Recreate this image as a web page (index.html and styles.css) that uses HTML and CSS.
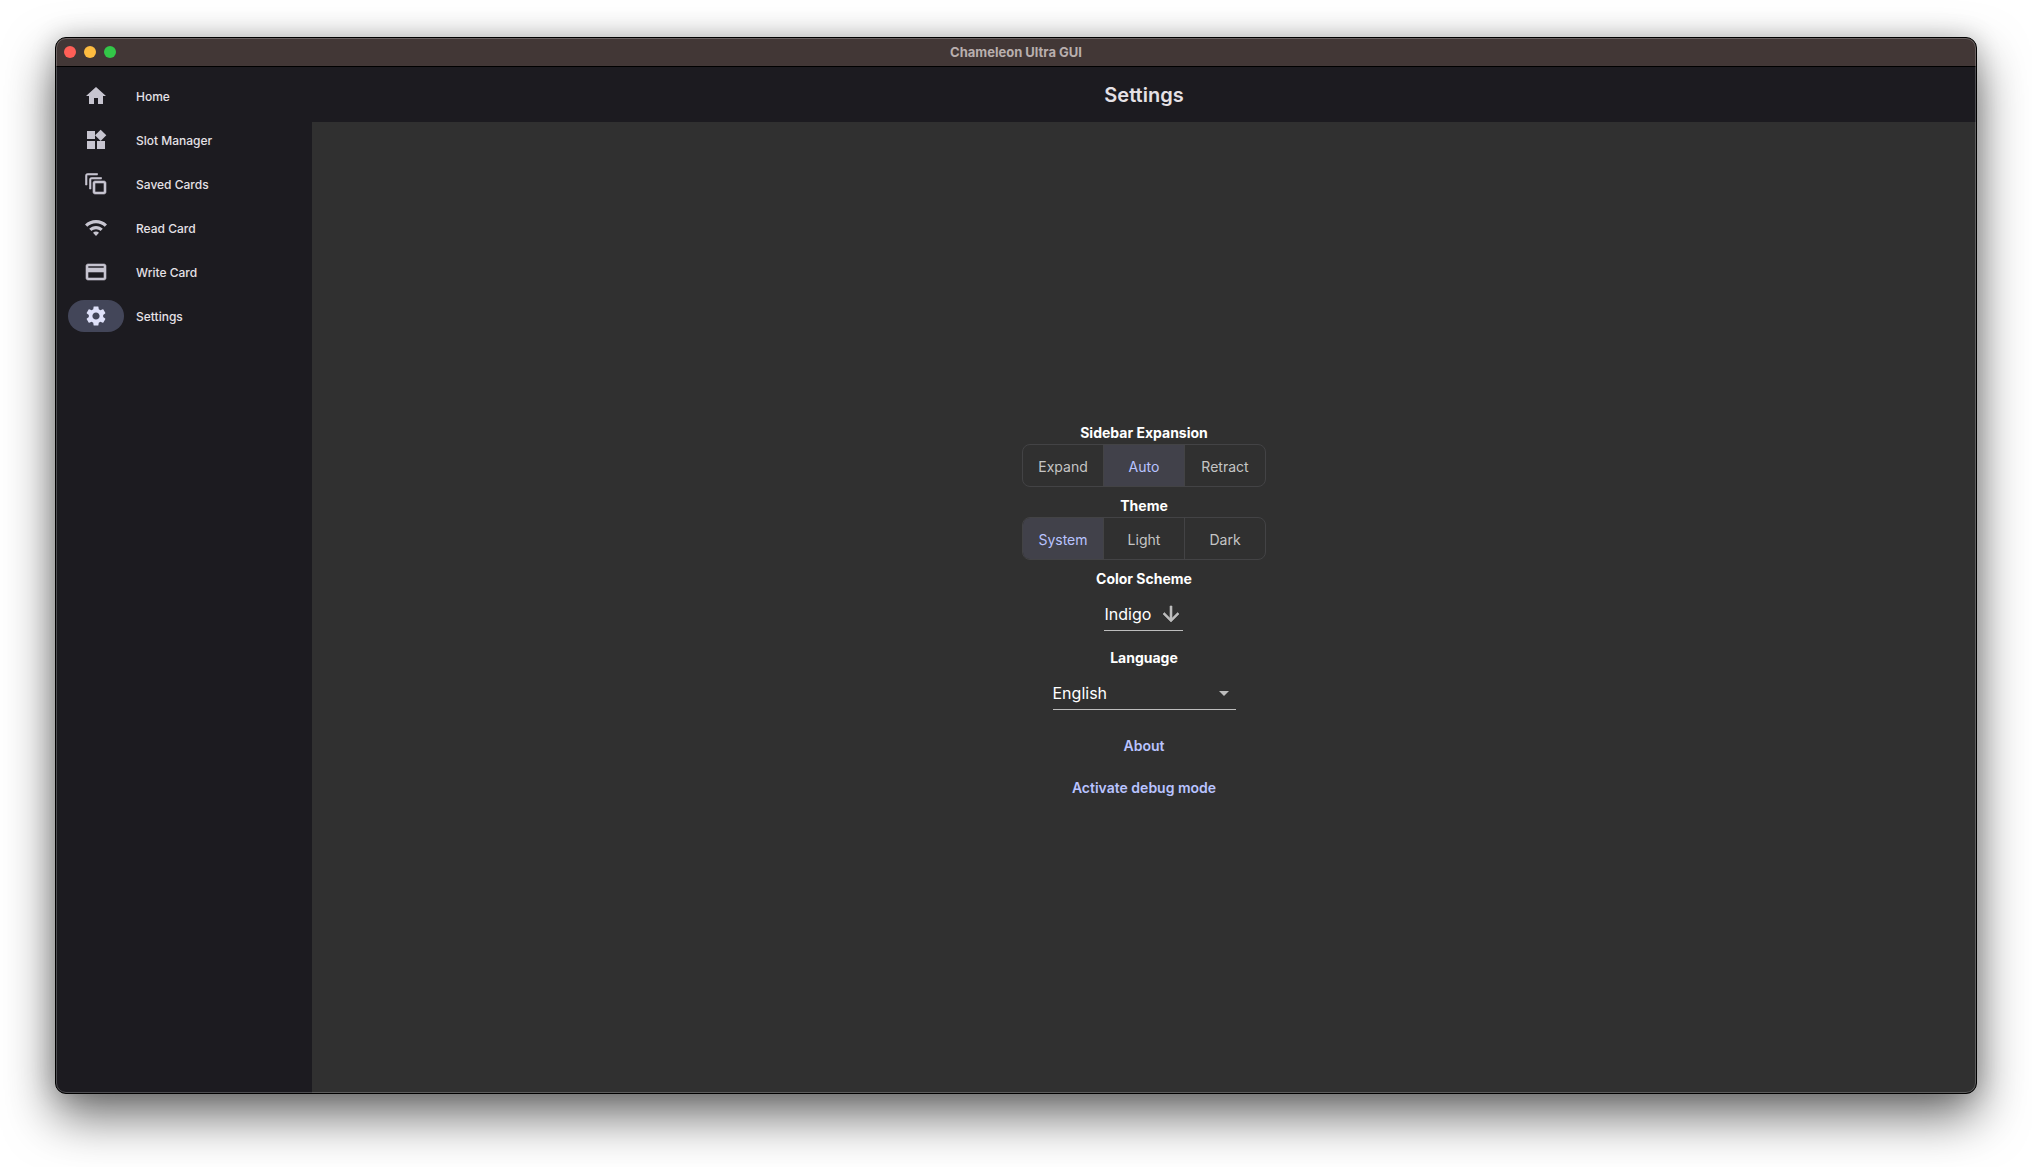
FILE: index.html
```html
<!DOCTYPE html>
<html lang="en">
<head>
    <meta charset="UTF-8">
    <meta name="viewport" content="width=device-width, initial-scale=1.0">
    <title>Chameleon Ultra GUI</title>
    <link rel="stylesheet" href="styles.css">
</head>
<body>
    <div class="window">
        <header class="titlebar">
            <div class="window-controls">
                <button type="button" class="control close" aria-label="Close"></button>
                <button type="button" class="control minimize" aria-label="Minimize"></button>
                <button type="button" class="control maximize" aria-label="Maximize"></button>
            </div>
            <div class="window-title">Chameleon Ultra GUI</div>
        </header>

        <div class="app">
            <nav class="sidebar">
                <a class="nav-item" href="#home">
                    <span class="nav-icon"><svg viewBox="0 0 24 24"><path d="M10 20v-6h4v6h5v-8h3L12 3 2 12h3v8z"/></svg></span>
                    <span class="nav-label">Home</span>
                </a>
                <a class="nav-item" href="#slots">
                    <span class="nav-icon"><svg viewBox="0 0 24 24"><path d="M13 13v8h8v-8h-8zM3 21h8v-8H3v8zM3 3v8h8V3H3zm13.66-1.31L11 7.34 16.66 13l5.66-5.66-5.66-5.65z"/></svg></span>
                    <span class="nav-label">Slot Manager</span>
                </a>
                <a class="nav-item" href="#saved">
                    <span class="nav-icon"><svg class="bold" viewBox="0 0 24 24"><path d="M3 13H1.500V3.500c0-1.100.9-2 2-2h10V3H3v10zM7 17H5.500V7.500c0-1.100.9-2 2-2h10V7H7v10zM20 22h-9c-1.100 0-2-.9-2-2v-9c0-1.100.9-2 2-2h9c1.100 0 2 .9 2 2v9c0 1.100-.9 2-2 2zM11 11v9h9v-9h-9z"/></svg></span>
                    <span class="nav-label">Saved Cards</span>
                </a>
                <a class="nav-item" href="#read">
                    <span class="nav-icon"><svg viewBox="0 0 24 24"><path d="M12 4C7.700 4 3.800 5.700 1 8.500l2.300 2.300C5.500 8.600 8.600 7.200 12 7.200s6.500 1.400 8.700 3.600L23 8.500C20.200 5.700 16.300 4 12 4zM12 10c-2.700 0-5.100 1.100-6.800 2.800l2.300 2.300c1.150-1.150 2.750-1.900 4.500-1.900s3.350.75 4.500 1.900l2.300-2.300C17.100 11.100 14.700 10 12 10zM12 15.600c-1.200 0-2.200.4-3 1.200l3 3.200 3-3.200c-.8-.8-1.800-1.200-3-1.200z"/></svg></span>
                    <span class="nav-label">Read Card</span>
                </a>
                <a class="nav-item" href="#write">
                    <span class="nav-icon"><svg class="bold" viewBox="0 0 24 24"><path d="M20 4H4c-1.110 0-1.990.89-1.990 2L2 18c0 1.110.89 2 2 2h16c1.110 0 2-.89 2-2V6c0-1.110-.89-2-2-2zm0 14H4v-6h16v6zm0-10H4V6h16v2z"/></svg></span>
                    <span class="nav-label">Write Card</span>
                </a>
                <a class="nav-item active" href="#settings" aria-current="page">
                    <span class="nav-icon"><svg viewBox="0 0 24 24"><path d="M19.140 12.940c.04-.3.06-.61.06-.94 0-.32-.02-.64-.07-.94l2.030-1.580c.18-.14.23-.41.12-.61l-1.920-3.320c-.12-.22-.37-.29-.59-.22l-2.390.96c-.5-.38-1.030-.7-1.620-.94l-.36-2.540c-.04-.24-.24-.41-.48-.41h-3.840c-.24 0-.43.17-.47.41l-.36 2.540c-.59.24-1.130.57-1.620.94l-2.390-.96c-.22-.08-.47 0-.59.22L2.740 8.870c-.12.21-.08.47.12.61l2.030 1.580c-.05.3-.09.63-.09.94s.02.64.07.94l-2.030 1.580c-.18.14-.23.41-.12.61l1.920 3.320c.12.22.37.29.59.22l2.390-.96c.5.38 1.030.7 1.620.94l.36 2.540c.05.24.24.41.48.41h3.840c.24 0 .44-.17.47-.41l.36-2.540c.59-.24 1.130-.56 1.620-.94l2.390.96c.22.08.47 0 .59-.22l1.920-3.320c.12-.22.07-.47-.12-.61l-2.010-1.580zM12 15.600c-1.980 0-3.600-1.620-3.600-3.600s1.620-3.600 3.600-3.600 3.600 1.620 3.600 3.600-1.620 3.600-3.600 3.600z"/></svg></span>
                    <span class="nav-label">Settings</span>
                </a>
            </nav>

            <main class="page">
                <div class="app-bar">
                    <h1>Settings</h1>
                </div>

                <div class="settings">
                    <section class="setting">
                        <h2 id="sidebar-label">Sidebar Expansion</h2>
                        <div class="toggle-group" role="group" aria-labelledby="sidebar-label">
                            <button type="button" aria-pressed="false">Expand</button>
                            <button type="button" aria-pressed="true">Auto</button>
                            <button type="button" aria-pressed="false">Retract</button>
                        </div>
                    </section>

                    <section class="setting">
                        <h2 id="theme-label">Theme</h2>
                        <div class="toggle-group" role="group" aria-labelledby="theme-label">
                            <button type="button" aria-pressed="true">System</button>
                            <button type="button" aria-pressed="false">Light</button>
                            <button type="button" aria-pressed="false">Dark</button>
                        </div>
                    </section>

                    <section class="setting">
                        <label for="color-scheme">Color Scheme</label>
                        <div class="dropdown">
                            <select id="color-scheme">
                                <option>Indigo</option>
                            </select>
                            <svg class="bold" viewBox="0 0 24 24"><path d="M20 12l-1.410-1.410L13 16.170V4h-2v12.170l-5.580-5.590L4 12l8 8 8-8z"/></svg>
                        </div>
                    </section>

                    <section class="setting">
                        <label for="language">Language</label>
                        <div class="dropdown wide">
                            <select id="language">
                                <option>English</option>
                            </select>
                            <svg viewBox="0 0 24 24"><path d="M7 10l5 5 5-5z"/></svg>
                        </div>
                    </section>

                    <div class="actions">
                        <button type="button">About</button>
                        <button type="button">Activate debug mode</button>
                    </div>
                </div>
            </main>
        </div>
    </div>

    <script>
        // Only one option can be pressed in each group
        document.querySelectorAll('.toggle-group').forEach(group => {
            group.addEventListener('click', (e) => {
                const button = e.target.closest('button');
                if (!button) return;
                group.querySelectorAll('button').forEach(el => {
                    el.setAttribute('aria-pressed', el === button);
                });
            });
        });
    </script>
</body>
</html>
```
FILE: styles.css
```css
* {
    box-sizing: border-box;
}

body {
    display: flex;
    height: 100vh;
    margin: 0;
    padding: 37px 55px 73px;
    overflow: hidden;
    background-color: #fff;
    color: #fff;
    font-family: Inter, "Liberation Sans", sans-serif;
}

button,
select {
    font-family: inherit;
    cursor: pointer;
}

h1,
h2 {
    margin: 0;
}

/* Window frame */
.window {
    position: relative;
    display: flex;
    flex: 1;
    flex-direction: column;
    border: 1px solid #000;
    border-radius: 11px;
    background-color: #303030;
    overflow: hidden;
    box-shadow: 0 22px 50px rgba(0,0,0,0.58), 0 0 24px rgba(0,0,0,0.18);
}

.window::after {
    content: "";
    position: absolute;
    inset: 0;
    border: 1px solid rgba(255,255,255,0.22);
    border-radius: 10px;
    pointer-events: none;
}

.titlebar {
    display: grid;
    grid-template-columns: 1fr auto 1fr;
    align-items: center;
    height: 29px;
    padding: 0 8px;
    background-color: #423736;
    border-bottom: 1px solid #000;
}

.window-controls {
    display: flex;
    gap: 8px;
}

.control {
    width: 12px;
    height: 12px;
    padding: 0;
    border: none;
    border-radius: 50%;
}

.close {
    background-color: #ff5f57;
}

.minimize {
    background-color: #febc40;
}

.maximize {
    background-color: #33c748;
}

.window-title {
    padding-bottom: 1px;
    color: #b9afae;
    font-size: 13px;
    font-weight: 700;
    line-height: 16px;
}

.app {
    display: flex;
    flex: 1;
    min-height: 0;
}

/* Sidebar */
.sidebar {
    display: flex;
    flex-direction: column;
    gap: 12px;
    width: 256px;
    padding: 13px 12px;
    background-color: #1c1b20;
}

.nav-item {
    display: flex;
    align-items: center;
    gap: 12px;
    color: #e5e1e6;
    font-size: 12px;
    font-weight: 500;
    line-height: 16px;
    text-decoration: none;
}

.nav-icon {
    display: flex;
    align-items: center;
    justify-content: center;
    width: 56px;
    height: 32px;
    border-radius: 16px;
    color: #c7c5d0;
}

.nav-label {
    padding-top: 2px;
}

.nav-item.active .nav-icon {
    background-color: #434659;
    color: #dfe1f9;
}

svg {
    width: 24px;
    height: 24px;
    fill: currentColor;
}

svg.bold {
    stroke: currentColor;
    stroke-width: 0.6;
}

/* Page */
.page {
    display: flex;
    flex: 1;
    flex-direction: column;
}

.app-bar {
    display: flex;
    align-items: center;
    justify-content: center;
    height: 55px;
    background-color: #1c1b20;
}

.app-bar h1 {
    color: #e5e1e6;
    font-size: 20px;
    font-weight: 600;
    line-height: 28px;
}

.settings {
    display: flex;
    flex: 1;
    flex-direction: column;
    align-items: center;
    justify-content: center;
    gap: 10px;
    padding-top: 12px;
}

.setting {
    display: flex;
    flex-direction: column;
    align-items: center;
}

.setting h2,
.setting label {
    padding-bottom: 2px;
    font-size: 14px;
    font-weight: 700;
    line-height: 18px;
}

.toggle-group {
    display: grid;
    grid-template-columns: 81px 81px 80px;
    height: 43px;
    border: 1px solid #434345;
    border-radius: 8px;
    overflow: hidden;
}

.toggle-group button {
    padding: 2px 0 0;
    border: none;
    border-right: 1px solid #434345;
    background: none;
    color: #c5c5c5;
    font-size: 14px;
    font-weight: 400;
}

.toggle-group button:last-child {
    border-right: none;
}

.toggle-group button[aria-pressed="true"] {
    background-color: #41414a;
    color: #b9c3ff;
}

.dropdown {
    position: relative;
    width: 79px;
    height: 49px;
}

.dropdown.wide {
    width: 183px;
}

.dropdown select {
    width: 100%;
    height: 41px;
    padding: 8px 24px 0 0;
    border: none;
    border-bottom: 1px solid #bdbdbd;
    border-radius: 0;
    outline: none;
    appearance: none;
    background: none;
    color: #fff;
    font-size: 16px;
}

.dropdown option {
    background-color: #303030;
}

.dropdown svg {
    position: absolute;
    top: 12px;
    right: 0;
    color: #bdbdbd;
    pointer-events: none;
}

.actions {
    display: flex;
    flex-direction: column;
    align-items: center;
    gap: 10px;
    padding-top: 1px;
}

.actions button {
    height: 32px;
    padding: 0 12px;
    border: none;
    border-radius: 16px;
    background: none;
    color: #b9c3ff;
    font-size: 14px;
    font-weight: 600;
}

.actions button:hover {
    background-color: rgba(185,195,255,0.08);
}
```
